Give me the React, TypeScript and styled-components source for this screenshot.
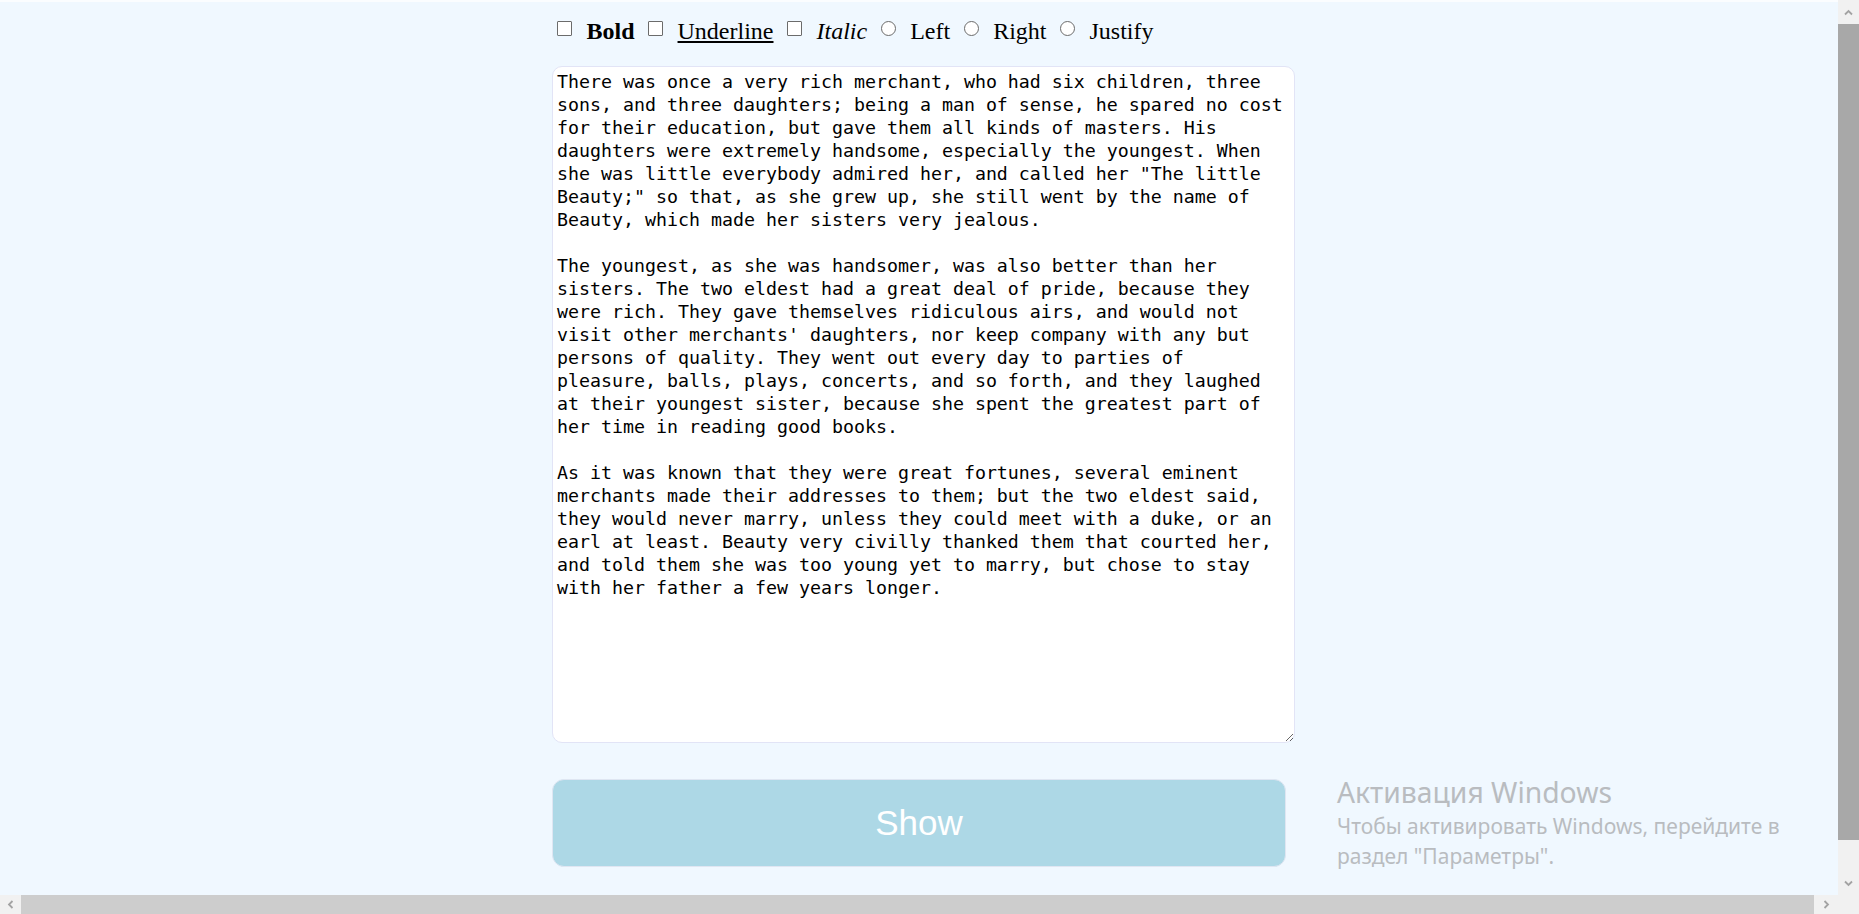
import React from "react";
import styled, { createGlobalStyle } from "styled-components";

const GlobalStyle = createGlobalStyle`
  html, body {
    margin: 0;
    padding: 0;
    height: 100%;
    overflow: hidden;
  }
  body {
    font-family: "Liberation Serif", "Times New Roman", serif;
  }
`;

const Frame = styled.div`
  display: grid;
  grid-template-columns: 1fr 21px;
  grid-template-rows: 1fr 19px;
  width: 100vw;
  height: 100vh;
`;

const Page = styled.main`
  position: relative;
  background: #f0f8ff;
  border-top: 2px solid #fbfdff;
  padding-left: 552px;
  overflow: hidden;
`;

const Column = styled.div`
  display: flex;
  flex-direction: column;
  width: 743px;
`;

const Toolbar = styled.div`
  display: flex;
  align-items: center;
  gap: 13.5px;
  margin-top: 16px;
  padding-left: 5px;
  height: 26px;
  font-family: "Liberation Serif", "Times New Roman", serif;
  font-size: 24px;
  line-height: 26px;
  color: #000;
`;

const Option = styled.label`
  display: inline-flex;
  align-items: center;
  gap: 14.5px;
  cursor: pointer;
`;

const Box = styled.input<{ $round?: boolean }>`
  appearance: none;
  -webkit-appearance: none;
  flex: none;
  margin: 0 0 6px 0;
  width: 15px;
  height: 15px;
  box-sizing: border-box;
  border: 1.5px solid #6b6b6b;
  border-radius: ${(p) => (p.$round ? "50%" : "1px")};
  background: #ffffff;
`;

const Caption = styled.span<{ $bold?: boolean; $underline?: boolean; $italic?: boolean }>`
  font-weight: ${(p) => (p.$bold ? 700 : 400)};
  text-decoration: ${(p) => (p.$underline ? "underline" : "none")};
  font-style: ${(p) => (p.$italic ? "italic" : "normal")};
`;

const Editor = styled.textarea`
  margin-top: 22px;
  box-sizing: border-box;
  width: 743px;
  height: 677px;
  padding: 3px 4px;
  border: 1px solid #e2e4f6;
  border-radius: 10px;
  background: #ffffff;
  color: #000;
  font-family: "DejaVu Sans Mono", "Liberation Mono", monospace;
  font-size: 18.272px;
  line-height: 23px;
  outline: none;
`;

const ShowButton = styled.button`
  margin-top: 36px;
  box-sizing: border-box;
  width: 734px;
  height: 88px;
  border: 1px solid #dfe6f2;
  border-radius: 12px;
  background: #add8e6;
  color: #ffffff;
  font-family: "Liberation Sans", Arial, sans-serif;
  font-size: 35px;
  cursor: pointer;
`;

const Watermark = styled.div`
  position: absolute;
  left: 1337px;
  top: 771px;
  color: #b9bcc0;
  font-family: "Noto Sans", "Open Sans", sans-serif;
  pointer-events: none;
`;

const WatermarkTitle = styled.div`
  font-size: 28.3px;
  line-height: 38px;
`;

const WatermarkText = styled.div`
  font-size: 21px;
  line-height: 30px;
  width: 480px;
`;

const VScroll = styled.div`
  display: grid;
  grid-template-rows: 24px 1fr 31px 24px;
  background: #f1f1f1;
`;

const HScroll = styled.div`
  display: grid;
  grid-template-columns: 21px 1fr 24px;
  background: #f1f1f1;
`;

const Arrow = styled.div`
  display: flex;
  align-items: center;
  justify-content: center;
  color: #a3a3a3;
`;

const Thumb = styled.div<{ $dark?: boolean }>`
  background: ${(p) => (p.$dark ? "#a8a8a8" : "#cdcdcd")};
`;

const Corner = styled.div`
  background: #f1f1f1;
`;

const Chevron = ({ dir }: { dir: "up" | "down" | "left" | "right" }) => {
  const rot = { up: 0, right: 90, down: 180, left: 270 }[dir];
  return (
    <svg width="9" height="9" viewBox="0 0 9 9" style={{ transform: `rotate(${rot}deg)` }}>
      <path d="M1 6.5 L4.5 3 L8 6.5" fill="none" stroke="currentColor" strokeWidth="1.8" />
    </svg>
  );
};

const STORY = [
  `There was once a very rich merchant, who had six children, three sons, and three daughters; being a man of sense, he spared no cost for their education, but gave them all kinds of masters. His daughters were extremely handsome, especially the youngest. When she was little everybody admired her, and called her "The little Beauty;" so that, as she grew up, she still went by the name of Beauty, which made her sisters very jealous.`,
  `The youngest, as she was handsomer, was also better than her sisters. The two eldest had a great deal of pride, because they were rich. They gave themselves ridiculous airs, and would not visit other merchants' daughters, nor keep company with any but persons of quality. They went out every day to parties of pleasure, balls, plays, concerts, and so forth, and they laughed at their youngest sister, because she spent the greatest part of her time in reading good books.`,
  `As it was known that they were great fortunes, several eminent merchants made their addresses to them; but the two eldest said, they would never marry, unless they could meet with a duke, or an earl at least. Beauty very civilly thanked them that courted her, and told them she was too young yet to marry, but chose to stay with her father a few years longer.`,
].join("\n\n");

export default function App() {
  return (
    <>
      <GlobalStyle />
      <Frame>
        <Page>
          <Column>
            <Toolbar>
              <Option>
                <Box type="checkbox" />
                <Caption $bold>Bold</Caption>
              </Option>
              <Option>
                <Box type="checkbox" />
                <Caption $underline>Underline</Caption>
              </Option>
              <Option>
                <Box type="checkbox" />
                <Caption $italic>Italic</Caption>
              </Option>
              <Option>
                <Box type="radio" name="align" $round />
                <Caption>Left</Caption>
              </Option>
              <Option>
                <Box type="radio" name="align" $round />
                <Caption>Right</Caption>
              </Option>
              <Option>
                <Box type="radio" name="align" $round />
                <Caption>Justify</Caption>
              </Option>
            </Toolbar>
            <Editor defaultValue={STORY} spellCheck={false} />
            <ShowButton>Show</ShowButton>
          </Column>
          <Watermark>
            <WatermarkTitle>Активация Windows</WatermarkTitle>
            <WatermarkText>Чтобы активировать Windows, перейдите в раздел "Параметры".</WatermarkText>
          </Watermark>
        </Page>
        <VScroll>
          <Arrow>
            <Chevron dir="up" />
          </Arrow>
          <Thumb $dark />
          <div />
          <Arrow>
            <Chevron dir="down" />
          </Arrow>
        </VScroll>
        <HScroll>
          <Arrow>
            <Chevron dir="left" />
          </Arrow>
          <Thumb />
          <Arrow>
            <Chevron dir="right" />
          </Arrow>
        </HScroll>
        <Corner />
      </Frame>
    </>
  );
}
